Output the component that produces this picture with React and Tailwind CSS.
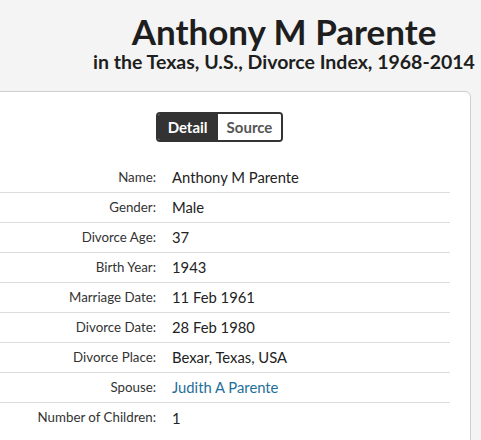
import React, { useState } from "react";

const rows = [
  { label: "Name", value: "Anthony M Parente" },
  { label: "Gender", value: "Male" },
  { label: "Divorce Age", value: "37" },
  { label: "Birth Year", value: "1943" },
  { label: "Marriage Date", value: "11 Feb 1961" },
  { label: "Divorce Date", value: "28 Feb 1980" },
  { label: "Divorce Place", value: "Bexar, Texas, USA" },
  { label: "Spouse", value: "Judith A Parente", link: true },
  { label: "Number of Children", value: "1" },
];

export default function App() {
  const [tab, setTab] = useState("detail");

  return (
    <div className="min-h-[440px] bg-[#f4f4f4] overflow-hidden font-['Lato',sans-serif] text-[#222]">
      {/* Header */}
      <div className="pl-[87px] pt-[11px] text-center">
        <h1 className="text-[35px] leading-[40px] font-bold text-[#1e1e1e]">Anthony M Parente</h1>
        <h2 className="text-[19.5px] leading-[22px] font-bold text-[#1e1e1e]">
          in the Texas, U.S., Divorce Index, 1968-2014
        </h2>
      </div>

      {/* Record card */}
      <div className="mt-[18px] ml-[-32px] w-[503px] bg-white border border-[#cfcfcf] rounded-md pt-[20px] px-[20px] pb-4">
        <div className="flex justify-center">
          <div className="flex h-[30px] border-2 border-[#333] rounded-[4px] overflow-hidden text-[15px] font-bold">
            <button
              onClick={() => setTab("detail")}
              className={`px-[10px] ${tab === "detail" ? "bg-[#333] text-white" : "bg-white text-[#555]"}`}
            >
              Detail
            </button>
            <button
              onClick={() => setTab("source")}
              className={`px-[9px] ${tab === "source" ? "bg-[#333] text-white" : "bg-white text-[#555]"}`}
            >
              Source
            </button>
          </div>
        </div>

        <div className="mt-[21px]">
          {rows.map((row, i) => (
            <div
              key={row.label}
              className={`flex items-center h-[30px] ${i < rows.length - 1 ? "border-b border-[#dcdcdc]" : ""}`}
            >
              <div className="w-[167px] shrink-0 text-right text-[13.3px] text-[#333]">{row.label}:</div>
              <div className={`pl-[16px] text-[14.8px] ${row.link ? "text-[#1f6f9a]" : "text-[#222]"}`}>
                {row.value}
              </div>
            </div>
          ))}
        </div>
      </div>
    </div>
  );
}
